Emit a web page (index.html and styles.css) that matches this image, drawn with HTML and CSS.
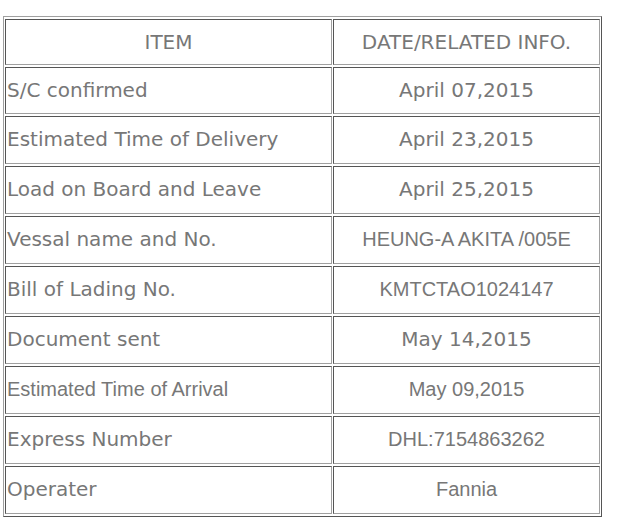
FILE: index.html
```html
<!DOCTYPE html>
<html>
<head>
<meta charset="utf-8">
<link rel="stylesheet" href="styles.css">
</head>
<body>
<table class="info">
  <tr class="head">
    <td class="c1 center">ITEM</td>
    <td class="c2">DATE/RELATED INFO.</td>
  </tr>
  <tr class="first"><td class="c1">S/C confirmed</td><td class="c2">April 07,2015</td></tr>
  <tr><td class="c1">Estimated Time of Delivery</td><td class="c2">April 23,2015</td></tr>
  <tr><td class="c1">Load on Board and Leave</td><td class="c2">April 25,2015</td></tr>
  <tr><td class="c1">Vessal name and No.</td><td class="c2 arial">HEUNG-A AKITA /005E</td></tr>
  <tr><td class="c1">Bill of Lading No.</td><td class="c2 arial">KMTCTAO1024147</td></tr>
  <tr><td class="c1">Document sent</td><td class="c2">May 14,2015</td></tr>
  <tr><td class="c1 arial">Estimated Time of Arrival</td><td class="c2 arial">May 09,2015</td></tr>
  <tr><td class="c1">Express Number</td><td class="c2 arial">DHL:7154863262</td></tr>
  <tr><td class="c1">Operater</td><td class="c2 arial">Fannia</td></tr>
</table>
</body>
</html>
```
FILE: styles.css
```css
html, body {
  margin: 0;
  background: #fff;
}
body {
  padding: 16px 0 0 3px;
}
.info {
  border-collapse: separate;
  border-spacing: 1px 2px;
  width: 599px;
  border-style: solid;
  border-width: 1px;
  border-color: #a0a0a0 #555 #555 #a0a0a0;
  font-family: "DejaVu Sans", Verdana, sans-serif;
  font-size: 20px;
  color: #777;
  table-layout: fixed;
}
.info td {
  border-style: solid;
  border-width: 1px;
  border-color: #555 #a0a0a0 #a0a0a0 #555;
  padding: 0 1px 2px;
  box-sizing: border-box;
  height: 48px;
  vertical-align: middle;
  white-space: nowrap;
}
.info .head td {
  height: 46px;
  padding-bottom: 0;
}
.info .first td {
  height: 47px;
}
.info .c1 {
  width: 327px;
  text-align: left;
}
.info .c2 {
  text-align: center;
}
.info .center {
  text-align: center;
}
.info .arial {
  font-family: "Liberation Sans", Arial, sans-serif;
}
```
